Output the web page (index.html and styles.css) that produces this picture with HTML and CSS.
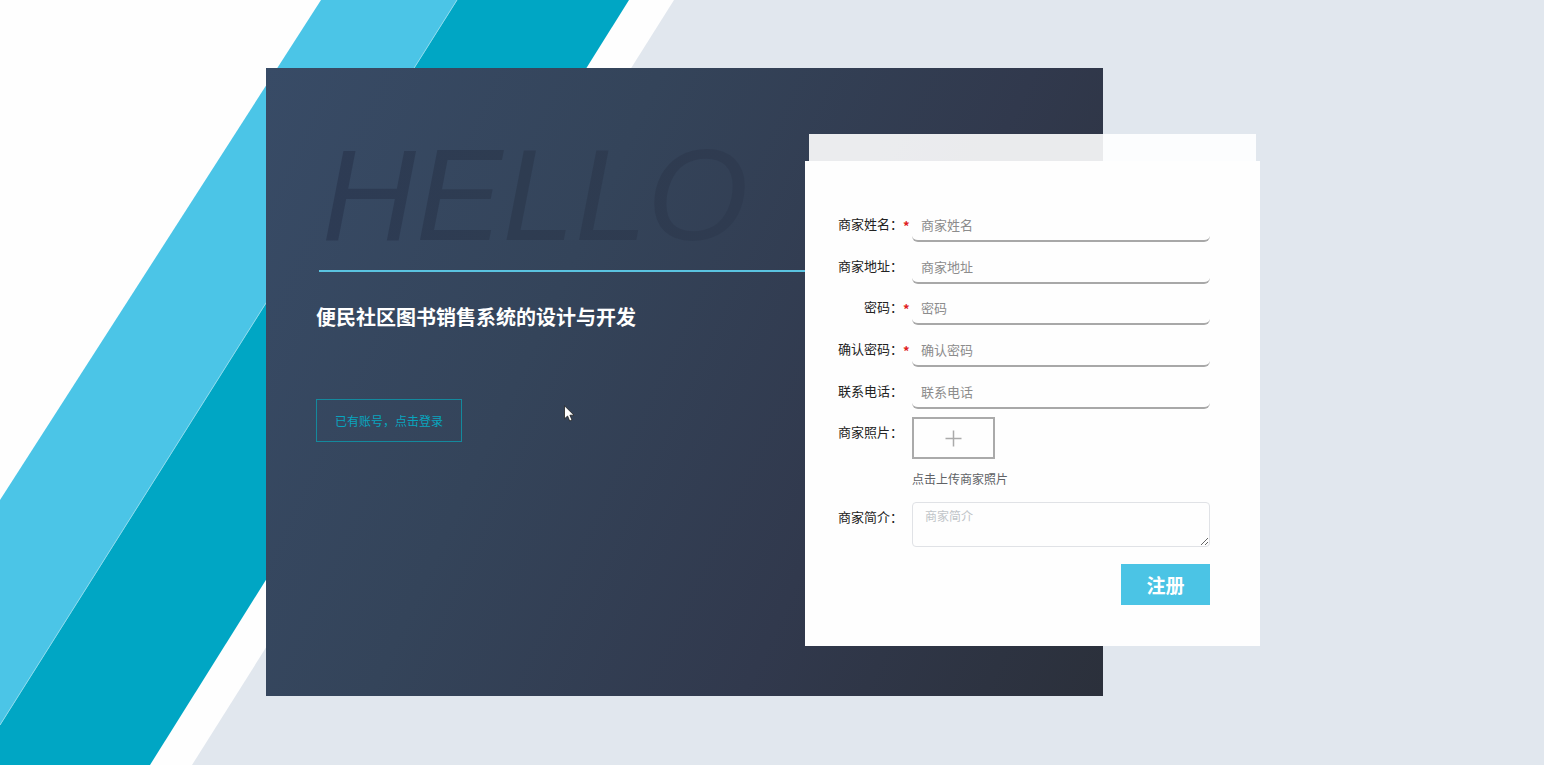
FILE: index.html
```html
<!DOCTYPE html>
<html lang="zh-CN">
<head>
  <meta charset="UTF-8">
  <meta name="viewport" content="width=device-width, initial-scale=1.0">
  <title>商家注册</title>

  <link rel="stylesheet" href="styles.css">
</head>
<body>
  <svg class="stripes" viewBox="0 0 1544 765" preserveAspectRatio="xMinYMin slice" aria-hidden="true">
    <polygon fill="#fefefe" points="0,0 674,0 192,765 0,765"/>
    <polygon fill="#00a6c4" points="457,0 629,0 150,765 0,765 0,725"/>
    <polygon fill="#4bc5e7" points="321,0 457,0 0,725 0,500"/>
    <path stroke="#8ad9ec" d="M457 0L0 725"/>
  </svg>

  <main class="page">
    <section class="hero">
      <div class="hello">HELLO</div>
      <hr class="line">
      <h1>便民社区图书销售系统的设计与开发</h1>
      <a class="login" href="#">已有账号，点击登录</a>
    </section>

    <div class="panel">
      <div class="tab"></div>
      <form class="form">
        <div class="row">
          <label for="name">商家姓名：</label><span class="star">*</span>
          <input type="text" id="name" placeholder="商家姓名">
        </div>
        <div class="row">
          <label for="address">商家地址：</label><span class="star"></span>
          <input type="text" id="address" placeholder="商家地址">
        </div>
        <div class="row">
          <label for="password">密码：</label><span class="star">*</span>
          <input type="password" id="password" placeholder="密码">
        </div>
        <div class="row">
          <label for="confirm">确认密码：</label><span class="star">*</span>
          <input type="password" id="confirm" placeholder="确认密码">
        </div>
        <div class="row">
          <label for="phone">联系电话：</label><span class="star"></span>
          <input type="text" id="phone" placeholder="联系电话">
        </div>
        <div class="row">
          <label for="photo">商家照片：</label><span class="star"></span>
          <div>
            <button class="upload" type="button" id="photo">
              <svg width="17" height="17" viewBox="0 0 17 17"><path d="M8.5 0.500V16.500M0.500 8.500H16.500" stroke="#aaa" stroke-width="1.500"/></svg>
            </button>
            <p class="tip">点击上传商家照片</p>
          </div>
        </div>
        <div class="row">
          <label for="intro">商家简介：</label><span class="star"></span>
          <textarea id="intro" placeholder="商家简介"></textarea>
        </div>
        <button class="submit" type="submit">注册</button>
      </form>
    </div>
  </main>

  <svg class="cursor" width="12" height="18" viewBox="0 0 12 18" aria-hidden="true">
    <path d="M.5.8V13.800L3.600 11L5.700 16L8 15L5.900 10.200H10Z" fill="#fff" stroke="#222" stroke-width=".8"/>
  </svg>
</body>
</html>
```
FILE: styles.css
```css
* {
    box-sizing: border-box;
}
body {
    margin: 0;
    min-height: 100vh;
    font-family: "Noto Sans CJK SC", sans-serif;
    font-size: 13px;
    background-color: #e1e7ee;
}
.stripes {
    position: absolute;
    top: 0;
    left: 0;
    width: 100%;
    height: 100%;
    z-index: -1;
}

/* the form panel shares the third column with the hero */
.page {
    display: grid;
    grid-template-columns: 266fr 539fr 298fr 157fr 284fr;
    padding: 68px 0;
}
.hero {
    grid-column: 2 / 4;
    grid-row: 1;
    min-height: 628px;
    padding: 62px 0 50px 50px;
    background: linear-gradient(115deg, #384b66 0%, #34445a 35%, #31394d 68%, #2b303b 100%);
}
.hello {
    padding-left: 6px;
    font-family: "Liberation Sans", Arial, sans-serif;
    font-size: 130px;
    font-style: italic;
    line-height: 130px;
    color: transparent;
    background: linear-gradient(90deg, #2d3b54 0, #2e3c51 200px, #2f3b50 430px);
    -webkit-background-clip: text;
    background-clip: text;
}
.line {
    height: 2px;
    margin: 10px 0 0 3px;
    border: none;
    background-color: #5ac3e0;
}
h1 {
    margin: 33px 0 70px;
    font-size: 20px;
    font-weight: 600;
    line-height: 24px;
    color: #fff;
}
.login {
    display: inline-block;
    padding: 0 18px;
    border: 1px solid #14899d;
    font-size: 12px;
    line-height: 41px;
    color: #08a5bf;
    text-decoration: none;
}

.panel {
    grid-column: 3 / 5;
    grid-row: 1;
    align-self: start;
    margin-top: 66px;
}
.tab {
    height: 27px;
    margin: 0 4px;
    background-color: rgba(255, 255, 255, 0.9);
}
.form {
    display: flex;
    flex-direction: column;
    gap: 8px;
    padding: 48px 50px 41px 33px;
    background-color: #fefefe;
}
.row {
    display: flex;
    align-items: flex-start;
}
label {
    width: 65px;
    line-height: 30px;
    text-align: right;
    white-space: nowrap;
    color: #222;
}
.star {
    width: 9px;
    font-weight: bold;
    line-height: 34px;
    color: #e02020;
}
input,
textarea {
    flex: 1;
    min-width: 0;
    font-family: inherit;
    background-color: transparent;
    outline: none;
}
input {
    height: 33px;
    padding: 0 9px;
    border: none;
    border-bottom: 2px solid #a8a8a8;
    border-radius: 6px;
    font-size: 13px;
}
input::placeholder {
    color: #8c8c8c;
}
.upload {
    display: flex;
    justify-content: center;
    align-items: center;
    width: 83px;
    height: 42px;
    padding: 0;
    border: 2px solid #aaa;
    background-color: transparent;
    cursor: pointer;
}
.tip {
    margin: 10px 0 5px;
    font-size: 12px;
    line-height: 20px;
    color: #606266;
}
textarea {
    height: 45px;
    padding: 4px 12px;
    border: 1px solid #e0e2e6;
    border-radius: 4px;
    font-size: 12px;
    line-height: 18px;
    resize: vertical;
}
textarea::placeholder {
    color: #c0c4c8;
}
.submit {
    align-self: flex-end;
    width: 89px;
    height: 41px;
    margin-top: 9px;
    padding: 0;
    border: none;
    font-family: inherit;
    font-size: 19px;
    font-weight: bold;
    color: #fff;
    background-color: #4bc4e5;
    cursor: pointer;
}
.cursor {
    position: absolute;
    top: 405px;
    left: 564px;
}
```
